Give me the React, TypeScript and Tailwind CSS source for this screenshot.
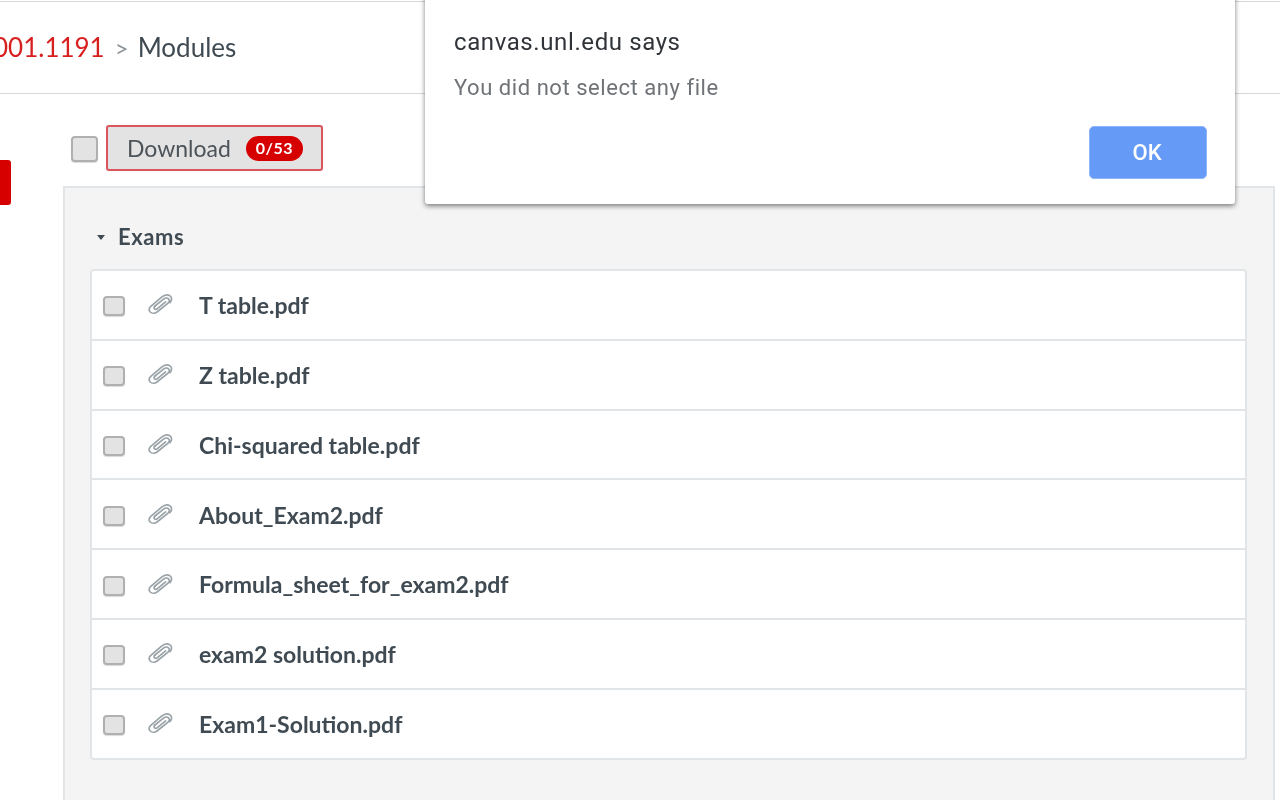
const files = [
  "T table.pdf",
  "Z table.pdf",
  "Chi-squared table.pdf",
  "About_Exam2.pdf",
  "Formula_sheet_for_exam2.pdf",
  "exam2 solution.pdf",
  "Exam1-Solution.pdf",
];

function FakeCheckbox({ className }: { className: string }) {
  return <span className={`block shrink-0 rounded-[4px] border-2 border-[#b0b0b0] bg-[#e3e3e3] shadow-[0_1px_1px_rgba(0,0,0,0.15)] ${className}`} />;
}

function Clip() {
  return (
    <svg className="block w-[26px] h-[22px] shrink-0 text-[#9aa3a8]" viewBox="0 0 26 22" fill="none" stroke="currentColor" strokeWidth={1.7} strokeLinecap="round" strokeLinejoin="round">
      <path d="M8 13 L16.5 6.2 C18.4 4.7 20.8 5 21.8 6.2 C22.8 7.4 22.4 9 20.8 10.3 L10 19 C7.9 20.6 4.9 20.6 3.2 19 C1.6 17.4 1.9 15 3.8 13.4 L14.6 4.2 C17.2 2 20.8 1.4 23 2.9 C25.2 4.4 25 7.6 23 9.6" />
      <path d="M8 13 C6.8 14.1 6.8 15.5 7.8 16.1 C8.6 16.6 9.6 16.3 10.4 15.6 L18.6 8.8" />
    </svg>
  );
}

export default function App() {
  return (
    <div className="relative w-[1280px] h-[800px] overflow-hidden bg-white font-['Lato','Liberation_Sans',sans-serif] text-[#3f4a52] blur-[0.4px]">
      <div className="mt-[1px] h-[93px] border-t border-b border-[#d4d9dc] flex items-center -ml-[7px] text-[26px]">
        <span className="text-[#d81f1f]">001.1191</span>
        <span className="ml-[10px] mr-[9px] text-[#8b9298] text-[24px]">&gt;</span>
        <span>Modules</span>
      </div>

      <div className="flex">
        <div className="w-[63px] shrink-0">
          <div className="mt-[66px] w-[11px] h-[45px] bg-[#d70000] rounded-r-[3px]" />
        </div>

        <div className="w-[1212px] shrink-0">
          <div className="mt-[31px] flex items-center">
            <FakeCheckbox className="ml-[8px] w-[27px] h-[26px] mt-[1px]" />
            <button className="ml-[8px] w-[217px] h-[46px] flex items-center pl-[19px] bg-[#e3e3e3] border-2 border-[#d9575c] rounded-[3px] text-[23px] text-[#4c5359]">
              Download
              <span className="ml-[15px] h-[25px] w-[57px] rounded-full bg-[#d70000] text-white text-[16px] font-bold flex items-center justify-center tracking-[0.5px]">0/53</span>
            </button>
          </div>

          <div className="mt-[15px] h-[640px] border-2 border-b-0 border-[#e2e5e7] bg-[#f4f4f4] pl-[25px] pr-[26px]">
            <div className="h-[81px] flex items-start pt-[34px] text-[22px] leading-[30px] font-bold tracking-[0.6px]">
              <span className="ml-[7px] mr-[13px] mt-[13px] w-0 h-0 border-x-[4.5px] border-x-transparent border-t-[5px] border-t-[#3f4a52]" />
              Exams
            </div>
            <div className="border-2 border-[#e2e5e7] rounded-[4px] bg-white">
              {files.map((name, i) => (
                <div key={name} className={`flex items-center pl-[11px] ${i < 6 ? "h-[69.8px] border-b-2 border-[#e2e5e7]" : "h-[68px]"}`}>
                  <FakeCheckbox className="w-[22px] h-[20px] mt-[3px]" />
                  <span className="ml-[22px] mt-[-1px]"><Clip /></span>
                  <span className="ml-[26px] mt-[1px] text-[23px] font-bold">{name}</span>
                </div>
              ))}
            </div>
          </div>
        </div>
      </div>

      <div className="absolute left-[425px] top-[-10px] w-[810px] h-[214px] bg-white rounded-b-[3px] shadow-[0_2px_5px_rgba(0,0,0,0.5)] font-['Roboto','Liberation_Sans',sans-serif]">
        <div className="absolute left-[29px] top-[36px] text-[24px] leading-[32px] tracking-[0.6px] text-[#303438]">canvas.unl.edu says</div>
        <div className="absolute left-[29px] top-[83px] text-[22px] leading-[30px] tracking-[0.55px] text-[#6f7276]">You did not select any file</div>
        <button className="absolute right-[28px] top-[136px] w-[118px] h-[53px] pr-[2px] rounded-[5px] border border-[#8db5f9] bg-[#659bf7] text-white text-[22px] font-medium">OK</button>
      </div>
    </div>
  );
}
